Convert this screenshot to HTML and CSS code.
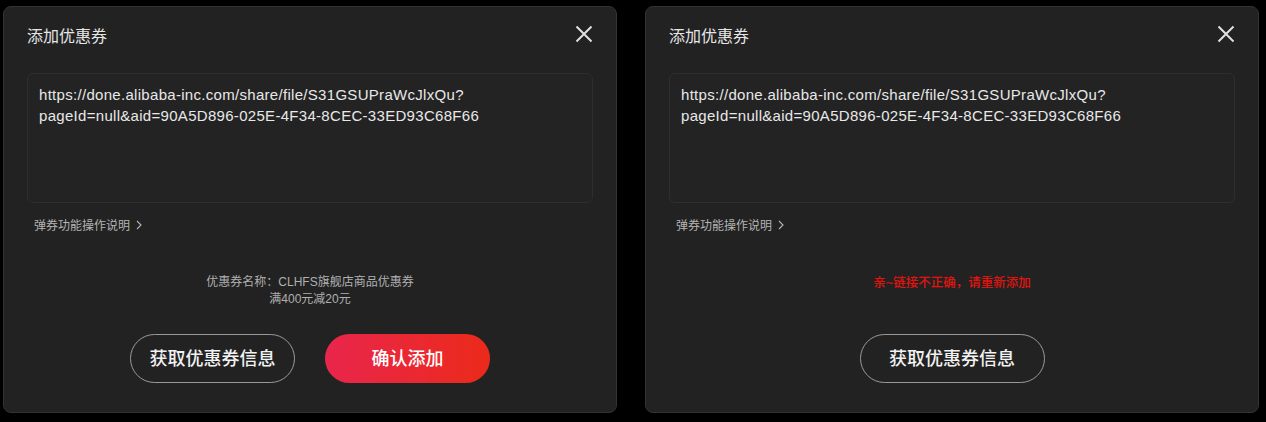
FILE: index.html
```html
<!DOCTYPE html>
<html lang="zh-CN">
<head>
<meta charset="utf-8">
<title>添加优惠券</title>
<link rel="stylesheet" href="styles.css">
</head>
<body>
<div class="stage">
  <section class="dialog">
    <header class="dialog-head">
      <h2 class="dialog-title">添加优惠券</h2>
      <svg class="close" viewBox="0 0 18 18" width="18" height="18"><path d="M1.5 1.5 L16.5 16.5 M16.5 1.5 L1.5 16.5" /></svg>
    </header>
    <div class="url-box">https://done.alibaba-inc.com/share/file/S31GSUPraWcJlxQu?<br>pageId=null&amp;aid=90A5D896-025E-4F34-8CEC-33ED93C68F66</div>
    <div class="help">弹券功能操作说明<svg class="chev" viewBox="0 0 6 10" width="6" height="10"><path d="M1 1 L5 5 L1 9" /></svg></div>
    <div class="info">
      <p>优惠券名称：CLHFS旗舰店商品优惠券</p>
      <p>满400元减20元</p>
    </div>
    <div class="actions">
      <button class="btn btn-ghost">获取优惠券信息</button>
      <button class="btn btn-primary">确认添加</button>
    </div>
  </section>
  <section class="dialog">
    <header class="dialog-head">
      <h2 class="dialog-title">添加优惠券</h2>
      <svg class="close" viewBox="0 0 18 18" width="18" height="18"><path d="M1.5 1.5 L16.5 16.5 M16.5 1.5 L1.5 16.5" /></svg>
    </header>
    <div class="url-box">https://done.alibaba-inc.com/share/file/S31GSUPraWcJlxQu?<br>pageId=null&amp;aid=90A5D896-025E-4F34-8CEC-33ED93C68F66</div>
    <div class="help">弹券功能操作说明<svg class="chev" viewBox="0 0 6 10" width="6" height="10"><path d="M1 1 L5 5 L1 9" /></svg></div>
    <div class="info">
      <p class="error">亲~链接不正确，请重新添加</p>
    </div>
    <div class="actions">
      <button class="btn btn-ghost btn-wide">获取优惠券信息</button>
    </div>
  </section>
</div>
</body>
</html>
```
FILE: styles.css
```css
* { box-sizing: border-box; }
html, body {
  margin: 0;
  padding: 0;
  background: #000;
  font-family: "Liberation Sans", "Noto Sans CJK SC", sans-serif;
}
.stage {
  display: flex;
  gap: 28px;
  padding: 6px 0 0 3px;
}
.dialog {
  width: 614px;
  height: 407px;
  background: #222222;
  border: 1px solid #333333;
  border-radius: 8px;
  padding: 0 23px 0 23px;
  display: flex;
  flex-direction: column;
}
.dialog-head {
  display: flex;
  align-items: center;
  justify-content: space-between;
  height: 58px;
  padding-bottom: 3px;
}
.dialog-title {
  margin: 0;
  font-family: "Noto Sans CJK SC", sans-serif;
  font-size: 16px;
  font-weight: 400;
  color: #e6e6e6;
}
.close {
  margin-top: -2px;
}
.close path {
  stroke: #e0e0e0;
  stroke-width: 2;
  fill: none;
}
.url-box {
  margin-top: 8px;
  height: 130px;
  border: 1px solid #2e2e2e;
  border-radius: 6px;
  background: #232323;
  padding: 10px 11px;
  font-size: 15px;
  letter-spacing: 0.3px;
  line-height: 21px;
  color: #e8e8e8;
}
.help {
  margin-top: 13px;
  padding-left: 7px;
  display: flex;
  align-items: center;
  font-family: "Noto Sans CJK SC", sans-serif;
  font-size: 12px;
  line-height: 17px;
  color: #b4b4b4;
}
.chev {
  margin-left: 6px;
}
.chev path {
  stroke: #b4b4b4;
  stroke-width: 1.1;
  fill: none;
}
.info {
  height: 101px;
  padding-top: 41px;
  text-align: center;
  font-family: "Liberation Sans", "Noto Sans CJK SC", sans-serif;
  font-size: 12px;
  line-height: 17px;
  color: #b0b0b0;
}
.info p { margin: 0; }
.info .error {
  margin-top: 1px;
  color: #e3140f;
  font-size: 12.5px;
  font-weight: 500;
}
.actions {
  display: flex;
  justify-content: center;
  gap: 30px;
}
.btn {
  width: 165px;
  height: 49px;
  border-radius: 25px;
  padding: 0 0 3px;
  font-family: "Noto Sans CJK SC", sans-serif;
  font-size: 18px;
  font-weight: 500;
  color: #f2f2f2;
  cursor: pointer;
}
.btn-ghost {
  background: transparent;
  border: 1.5px solid #9a9a9a;
}
.btn-wide { width: 185px; }
.btn-primary {
  border: none;
  background: linear-gradient(90deg, #e9264c 0%, #eb2a1a 100%);
  color: #fff;
}
```
